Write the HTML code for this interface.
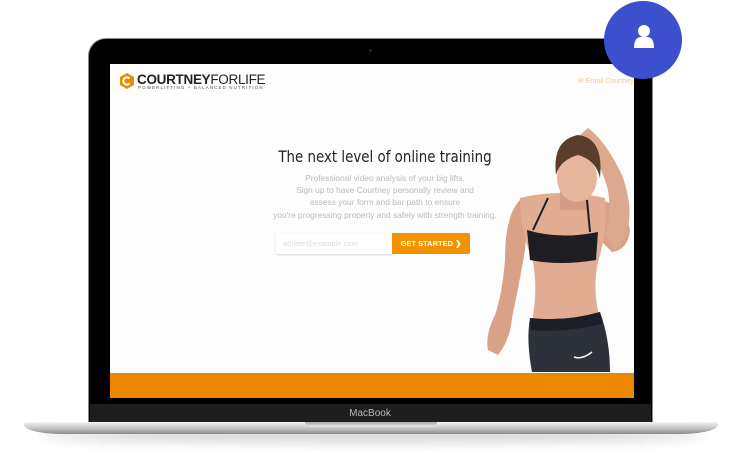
<!DOCTYPE html>
<html><head><meta charset="utf-8"><style>
body{margin:0;width:744px;height:457px;background:#fff;position:relative;overflow:hidden;font-family:"Liberation Sans",sans-serif}
.abs{position:absolute}
</style></head><body>
<div class="abs" style="left:40px;top:428px;width:664px;height:14px;border-radius:50%;background:rgba(0,0,0,0.18);filter:blur(6px)"></div>
<div class="abs" style="left:88px;top:38px;width:565px;height:392px;background:#000;border-radius:18px 18px 0 0;border:1px solid #888;box-sizing:border-box"></div>
<div class="abs" style="left:369px;top:49px;width:3px;height:3px;border-radius:50%;background:#222"></div>
<div class="abs" style="left:90px;top:404px;width:561px;height:22px;background:#1d1d1d"></div>
<div class="abs" style="left:300px;top:408px;width:140px;text-align:center;color:#bbb;font-size:10px">MacBook</div>
<div class="abs" style="left:24px;top:422px;width:694px;height:12px;background:linear-gradient(#f4f4f4,#bdbdbd 60%,#8a8a8a);border-radius:3px 3px 40px 40px/3px 3px 10px 10px"></div>
<div class="abs" style="left:305px;top:422px;width:132px;height:5px;background:linear-gradient(#aaa,#e8e8e8);border-radius:0 0 6px 6px"></div>
<div class="abs" style="left:110px;top:64px;width:524px;height:336px;background:#fdfdfd;overflow:hidden">
  <svg class="abs" style="left:8px;top:8px" width="18" height="18" viewBox="0 0 18 18"><polygon points="9,1 16,5 16,13 9,17 2,13 2,5" fill="#ee8a00"/><path d="M11.5 6.5 A3.6 3.6 0 1 0 11.5 11.5" fill="none" stroke="#fff" stroke-width="2"/></svg>
  <div class="abs" style="left:27px;top:8px;font-weight:bold;font-size:13.5px;color:#222;letter-spacing:-0.3px">COURTNEY<span style="font-weight:normal">FORLIFE</span></div>
  <div class="abs" style="left:28px;top:21px;font-size:4.5px;color:#555;letter-spacing:1.1px">POWERLIFTING + BALANCED NUTRITION</div>
  <div class="abs" style="left:468px;top:13px;font-size:7px;color:#f3c98f">✉ Email Courtney</div>
  <div class="abs" style="left:125px;top:83px;width:300px;text-align:center;font-size:16px;color:#222;font-family:'Liberation Sans Narrow','DejaVu Sans Condensed',sans-serif;transform:scaleX(0.93)">The next level of online training</div>
  <div class="abs" style="left:140px;top:108px;width:270px;text-align:center;font-size:8.4px;line-height:12.2px;color:#bbb">Professional video analysis of your big lifts.<br>Sign up to have Courtney personally review and<br>assess your form and bar path to ensure<br>you're progressing properly and safely with strength training.</div>
  <div class="abs" style="left:166px;top:169px;width:116px;height:21px;background:#fff;box-shadow:0 1px 2px rgba(0,0,0,0.15);border-radius:2px 0 0 2px;font-size:7.5px;color:#ddd;line-height:21px;padding-left:7px;box-sizing:border-box">athlete@example.com</div>
  <div class="abs" style="left:282px;top:169px;width:78px;height:21px;background:#f39200;border-radius:0 2px 2px 0;color:#fff;font-weight:bold;font-size:7.5px;line-height:21px;text-align:center">GET STARTED ❯</div>
  <!-- woman -->
  <svg class="abs" style="left:360px;top:0" width="164" height="336" viewBox="470 64 164 336">
    <!-- raised right arm -->
    <path d="M600 200 Q625 205 630 230 Q628 250 612 252 L600 240 Z" fill="#d9a287"/>
    <path d="M615 250 Q640 225 622 175 Q605 140 588 128 L580 135 Q600 160 608 190 Q612 215 605 235 Z" fill="#dca88e"/>
    <!-- left arm -->
    <path d="M520 200 Q505 215 505 260 Q502 295 495 315 Q485 335 488 350 L498 355 Q510 340 512 318 Q520 280 525 250 Q528 220 530 205 Z" fill="#d9a287"/>
    <!-- torso -->
    <path d="M520 198 Q560 188 605 198 Q608 230 598 262 Q592 290 600 320 L532 322 Q538 290 533 262 Q520 230 520 198 Z" fill="#e2ac92"/>
    <!-- neck -->
    <path d="M560 190 L585 190 L588 210 L560 210 Z" fill="#d49c82"/>
    <!-- head -->
    <ellipse cx="577" cy="178" rx="20" ry="24" fill="#e7b59b"/>
    <path d="M556 175 Q552 140 578 135 Q604 138 600 178 Q596 160 578 155 Q560 160 556 175 Z" fill="#5a3d2c"/>
    <!-- bra -->
    <path d="M527 230 Q560 240 598 232 L596 260 Q560 266 530 260 Z" fill="#1e1e22"/>
    <path d="M533 230 L548 198 M590 232 L587 200" stroke="#1e1e22" stroke-width="2"/>
    <!-- shorts -->
    <path d="M530 318 Q565 322 600 312 Q610 340 610 372 L532 372 Q526 340 530 318 Z" fill="#2c313b"/>
    <path d="M530 318 Q565 322 600 312 L602 324 Q565 333 531 330 Z" fill="#1c1f26"/>
    <path d="M574 357 Q582 360 592 352" stroke="#fff" stroke-width="1.5" fill="none"/>
  </svg>
  <div class="abs" style="left:0;top:309px;width:524px;height:27px;background:#ec8800"></div>
</div>
<div class="abs" style="left:110px;top:398px;width:524px;height:6px;background:#000"></div>
<div class="abs" style="left:604px;top:1px;width:78px;height:78px;border-radius:50%;background:#3c50cd"></div>
<svg class="abs" style="left:633px;top:24px" width="22" height="26" viewBox="0 0 22 26"><circle cx="11" cy="7" r="6" fill="#fff"/><path d="M1 24 Q1 13 8 13 L14 13 Q21 13 21 24 Z" fill="#fff"/></svg>
</body></html>
